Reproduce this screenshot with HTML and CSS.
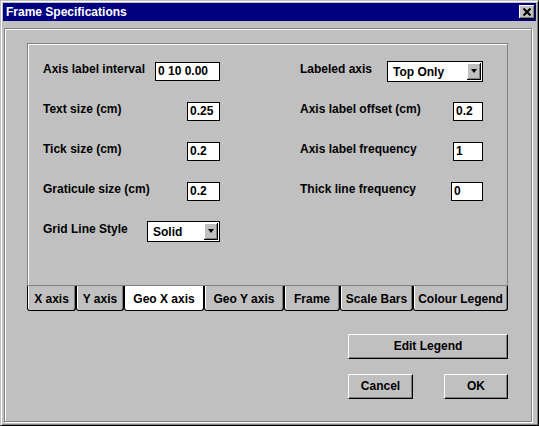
FILE: index.html
```html
<!DOCTYPE html>
<html>
<head>
<meta charset="utf-8">
<title>Frame Specifications</title>
<link rel="stylesheet" href="styles.css">
</head>
<body>
<div class="window">
  <div class="titlebar">
    <span class="title">Frame Specifications</span>
    <div class="close">
      <svg width="16" height="14" viewBox="0 0 16 14">
        <path d="M4.5 3.5 L11.5 10.5 M11.5 3.5 L4.5 10.5" stroke="#000" stroke-width="2" fill="none"/>
      </svg>
    </div>
  </div>
  <div class="frame">
    <div class="panel">
      <div class="grid">
        <div class="field"><span class="label">Axis label interval</span><span class="input w-interval">0 10 0.00</span></div>
        <div class="field"><span class="label">Labeled axis</span><span class="select w-top"><span class="sel-text">Top Only</span><span class="arrow"><span class="tri"></span></span></span></div>

        <div class="field"><span class="label">Text size (cm)</span><span class="input w-small">0.25</span></div>
        <div class="field"><span class="label">Axis label offset (cm)</span><span class="input w-right">0.2</span></div>

        <div class="field"><span class="label">Tick size (cm)</span><span class="input w-small">0.2</span></div>
        <div class="field"><span class="label">Axis label frequency</span><span class="input w-right">1</span></div>

        <div class="field"><span class="label">Graticule size (cm)</span><span class="input w-small">0.2</span></div>
        <div class="field"><span class="label">Thick line frequency</span><span class="input w-thick">0</span></div>

        <div class="field"><span class="label">Grid Line Style</span><span class="select w-solid"><span class="sel-text">Solid</span><span class="arrow"><span class="tri"></span></span></span></div>
        <div class="field"></div>
      </div>
    </div>
    <div class="tabs">
      <div class="tab t1">X axis</div>
      <div class="tab t2">Y axis</div>
      <div class="tab t3 active">Geo X axis</div>
      <div class="tab t4">Geo Y axis</div>
      <div class="tab t5">Frame</div>
      <div class="tab t6">Scale Bars</div>
      <div class="tab t7">Colour Legend</div>
    </div>
    <div class="actions">
      <div class="btn btn-wide">Edit Legend</div>
      <div class="btn-row">
        <div class="btn btn-cancel">Cancel</div>
        <div class="btn btn-ok">OK</div>
      </div>
    </div>
  </div>
</div>
</body>
</html>
```

FILE: styles.css
```css
html, body {
  margin: 0;
  padding: 0;
  background: #c0c0c0;
}
body {
  font-family: "Liberation Sans", Arial, sans-serif;
  font-weight: bold;
  font-size: 12px;
  color: #000;
}
.window {
  width: 539px;
  height: 426px;
  box-sizing: border-box;
  border: 1px solid;
  border-color: #c0c0c0 #000 #000 #c0c0c0;
  box-shadow: inset 1px 1px 0 #fff, inset -1px -1px 0 #808080;
  padding: 2px;
  display: flex;
  flex-direction: column;
  background: #c0c0c0;
}
.titlebar {
  height: 18px;
  background: #000080;
  display: flex;
  align-items: flex-start;
  justify-content: space-between;
  flex: none;
}
.title {
  color: #fff;
  font-size: 12px;
  line-height: 18px;
  padding-left: 3px;
}
.close {
  width: 16px;
  height: 14px;
  margin-top: 2px;
  margin-right: 1px;
  box-sizing: border-box;
  background: #c0c0c0;
  box-shadow: inset -1px -1px 0 #000, inset 1px 1px 0 #fff, inset -2px -2px 0 #808080;
  display: flex;
}
.close svg { display: block; }
.frame {
  flex: 1;
  margin: 7px 4px 1px 1px;
  border: 1px solid #808080;
  box-shadow: inset 1px 1px 0 #fff, 1px 1px 0 #fff;
  display: flex;
  flex-direction: column;
}
.panel {
  margin: 14px 0 0 22px;
  width: 481px;
  height: 243px;
  box-sizing: border-box;
  border: 1px solid #808080;
  box-shadow: inset 1px 1px 0 #fff;
  padding: 7px 0 0 15px;
}
.grid {
  display: grid;
  grid-template-columns: 177px 183px;
  grid-auto-rows: 40px;
  column-gap: 80px;
}
.field {
  display: flex;
  align-items: center;
  justify-content: space-between;
}
.label {
  padding-bottom: 4px;
  white-space: nowrap;
}
.input {
  box-sizing: border-box;
  height: 19px;
  background: #fff;
  border: 1px solid #000;
  padding-left: 2px;
  line-height: 17px;
  white-space: nowrap;
}
.w-interval { width: 65px; }
.w-small { width: 33px; }
.w-right { width: 30px; }
.w-thick { width: 32px; }
.select {
  box-sizing: border-box;
  height: 21px;
  background: #fff;
  border: 1px solid #000;
  display: flex;
  align-items: center;
  justify-content: space-between;
  padding: 1px;
}
.w-top { width: 96px; }
.w-solid { width: 73px; }
.sel-text {
  padding-left: 4px;
  padding-top: 1px;
}
.arrow {
  width: 14px;
  height: 17px;
  box-sizing: border-box;
  background: #c0c0c0;
  box-shadow: inset -1px -1px 0 #000, inset 1px 1px 0 #fff, inset -2px -2px 0 #808080;
  display: flex;
  align-items: center;
  justify-content: center;
}
.tri {
  width: 0;
  height: 0;
  border-left: 3.5px solid transparent;
  border-right: 3.5px solid transparent;
  border-top: 4px solid #000;
  margin-right: 1px;
}
.tabs {
  display: flex;
  margin-left: 22px;
  height: 25px;
}
.tab {
  box-sizing: border-box;
  height: 25px;
  border: 1px solid #000;
  border-top: none;
  border-radius: 0 0 3px 3px;
  box-shadow: inset 1px 0 0 #fff, inset -1px 0 0 #808080;
  text-align: center;
  line-height: 20px;
  padding-top: 3px;
  white-space: nowrap;
  background: #c0c0c0;
}
.tab.active {
  background: #fff;
  box-shadow: none;
}
.t1 { width: 49px; }
.t2 { width: 48px; }
.t3 { width: 80px; }
.t4 { width: 80px; }
.t5 { width: 56px; }
.t6 { width: 73px; }
.t7 { width: 95px; }
.actions {
  align-self: flex-end;
  width: 160px;
  margin: 23px 23px 0 0;
  display: flex;
  flex-direction: column;
  gap: 15px;
}
.btn-row {
  display: flex;
  justify-content: space-between;
}
.btn {
  box-sizing: border-box;
  height: 25px;
  background: #c0c0c0;
  border: 1px solid;
  border-color: #fff #000 #000 #fff;
  box-shadow: inset -1px -1px 0 #808080;
  text-align: center;
  line-height: 22px;
}
.btn-wide { width: 160px; }
.btn-cancel { width: 65px; }
.btn-ok { width: 64px; }
```
